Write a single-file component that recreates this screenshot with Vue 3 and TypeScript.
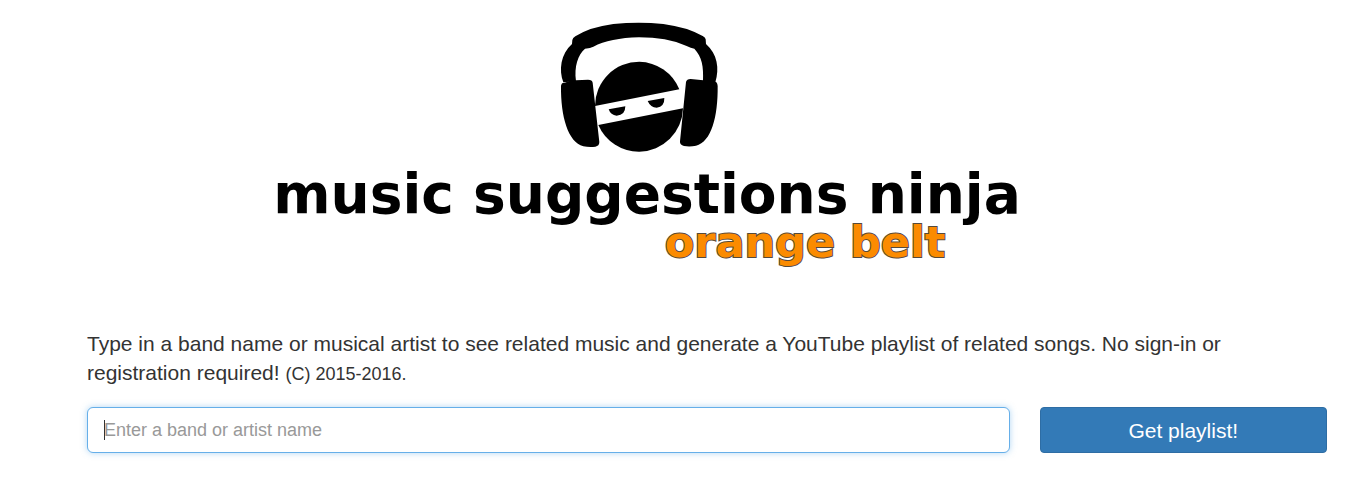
<script setup lang="ts">
import { onMounted, ref } from 'vue'

const query = ref('')
const field = ref<HTMLInputElement | null>(null)

onMounted(() => field.value?.focus())
</script>

<template>
  <main class="page">
    <header class="brand">
      <svg class="ninja" viewBox="0 0 582 468" role="img" aria-label="Ninja wearing headphones">
        <path d="M40 217C26 180 32 132 66 102L67 90Q68 84 76 79Q120 51 190 42Q267 35 340 42Q410 51 458 78Q466 82 467 88L468 102C502 132 509 175 496 217L459 213C461 168 456 142 433 116Q424 114 408 107Q350 82 267 82Q180 84 130 110Q122 115 105 116C84 135 72 168 78 214Z" />
        <path d="M33 228Q34 217 44 218Q60 211 78 211L114 209Q127 209 128 218L148 396Q148 408 136 410Q118 412 100 409C54 396 32 320 33 228Z" />
        <path d="M408 216Q410 207 422 207L460 211L492 214Q502 215 503 228C504 320 484 396 438 407Q420 411 402 408Q389 405 390 394Z" />
        <path d="M135 288A133 133 0 0 1 268 155A133 133 0 0 1 388 238Z" />
        <path d="M145 345L399 295A133 133 0 0 1 268 425A133 133 0 0 1 145 345Z" />
        <path d="M176 298L226 289Q226 316 200 317Q182 316 176 298ZM293 273L343 264Q344 290 320 293Q302 293 293 273Z" />
      </svg>
      <h1 class="name">music suggestions ninja</h1>
      <p class="belt">orange belt</p>
    </header>

    <p class="intro">
      Type in a band name or musical artist to see related music and generate a YouTube playlist of
      related songs. No sign-in or registration required! <small>(C) 2015-2016.</small>
    </p>

    <form class="search" @submit.prevent>
      <div class="entry">
        <input
          ref="field"
          v-model="query"
          class="field"
          type="text"
          aria-label="Band or artist name"
          placeholder="Enter a band or artist name"
        />
        <span v-if="!query" class="caret" aria-hidden="true"></span>
      </div>
      <button class="submit" type="submit">Get playlist!</button>
    </form>
  </main>
</template>

<style>
body {
  margin: 0;
  background: #fff;
}
</style>

<style scoped>
.page {
  box-sizing: border-box;
  padding: 10px 28px 38px 87px;
  color: #333;
  font-family: "Liberation Sans", Arial, sans-serif;
}

.brand {
  display: flex;
  flex-direction: column;
  align-items: center;
  padding-right: 120px;
  font-family: "DejaVu Sans", sans-serif;
  font-weight: 700;
  white-space: nowrap;
}

.ninja {
  display: block;
  width: 194px;
  height: 156px;
  fill: #000;
}

.name {
  margin: 0;
  color: #000;
  font-size: 55px;
  line-height: 56px;
}

.belt {
  margin: 0;
  padding-left: 316px;
  color: #fb8b00;
  font-size: 43px;
  line-height: 40px;
  -webkit-text-stroke: 2px #554a3c;
  paint-order: stroke fill;
}

.intro {
  margin: 67px 0 18px;
  font-size: 21px;
  line-height: 29px;
}

.intro small {
  font-size: 18px;
}

.search {
  display: grid;
  grid-template-columns: repeat(12, minmax(0, 1fr));
  column-gap: 30px;
}

.entry {
  position: relative;
  grid-column: span 9;
}

.field {
  box-sizing: border-box;
  display: block;
  width: 100%;
  height: 46px;
  padding: 10px 16px;
  border: 1px solid #66afe9;
  border-radius: 6px;
  outline: 0;
  background: #fff;
  box-shadow: 0 0 6px rgba(102, 175, 233, 0.5);
  color: #555;
  caret-color: transparent;
  font-family: inherit;
  font-size: 18px;
  line-height: 24px;
}

.field:not(:placeholder-shown) {
  caret-color: #333;
}

.field::placeholder {
  color: #999;
  opacity: 1;
}

.caret {
  position: absolute;
  top: 13px;
  left: 17px;
  width: 1px;
  height: 20px;
  background: #333;
  pointer-events: none;
}

.submit {
  grid-column: span 3;
  height: 46px;
  padding: 0 16px;
  border: 1px solid #2e6da4;
  border-radius: 4px;
  background: #337ab7;
  color: #fff;
  font-family: inherit;
  font-size: 21px;
  line-height: 29px;
  cursor: pointer;
}
</style>
